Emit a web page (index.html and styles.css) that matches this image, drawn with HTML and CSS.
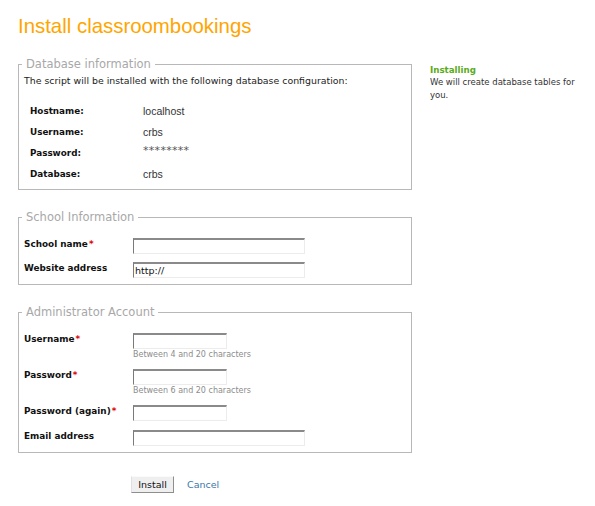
FILE: index.html
```html
<!DOCTYPE html>
<html>
<head>
<meta charset="utf-8">
<title>Install classroombookings</title>
<link rel="stylesheet" href="styles.css">
</head>
<body>
<div class="page">
  <h1 class="title">Install classroombookings</h1>
  <div class="layout">
    <form class="main">
      <fieldset class="box box-db">
        <legend>Database information</legend>
        <p class="intro">The script will be installed with the following database configuration:</p>
        <div class="dbtable">
          <div class="dbrow"><span class="dbkey">Hostname:</span><span class="dbval">localhost</span></div>
          <div class="dbrow"><span class="dbkey">Username:</span><span class="dbval">crbs</span></div>
          <div class="dbrow"><span class="dbkey">Password:</span><span class="dbval dbpass">********</span></div>
          <div class="dbrow"><span class="dbkey">Database:</span><span class="dbval">crbs</span></div>
        </div>
      </fieldset>

      <fieldset class="box">
        <legend>School Information</legend>
        <div class="rows">
          <div class="row"><label class="lbl">School name<span class="req">*</span></label><div class="field"><input class="inp inp-long" type="text"></div></div>
          <div class="row"><label class="lbl">Website address</label><div class="field"><input class="inp inp-long" type="text" value="http://"></div></div>
        </div>
      </fieldset>

      <fieldset class="box">
        <legend>Administrator Account</legend>
        <div class="rows">
          <div class="row"><label class="lbl">Username<span class="req">*</span></label><div class="field"><input class="inp inp-short" type="text"><div class="hint">Between 4 and 20 characters</div></div></div>
          <div class="row"><label class="lbl">Password<span class="req">*</span></label><div class="field"><input class="inp inp-short" type="password"><div class="hint">Between 6 and 20 characters</div></div></div>
          <div class="row"><label class="lbl">Password (again)<span class="req">*</span></label><div class="field"><input class="inp inp-short" type="password"></div></div>
          <div class="row row-last"><label class="lbl">Email address</label><div class="field"><input class="inp inp-long" type="text"></div></div>
        </div>
      </fieldset>

      <div class="actions">
        <button class="btn" type="button">Install</button>
        <a class="cancel" href="#">Cancel</a>
      </div>
    </form>
    <aside class="side">
      <div class="side-title">Installing</div>
      <div class="side-text">We will create database tables for you.</div>
    </aside>
  </div>
</div>
</body>
</html>
```

FILE: styles.css
```css
html, body {
  margin: 0;
  padding: 0;
  background: #fff;
}
body {
  font-family: "DejaVu Sans", Verdana, sans-serif;
  font-size: 9.4px;
  color: #222;
}
.page {
  padding: 0 18px;
}
.title {
  margin: 13px 0 0;
  font-family: "Liberation Sans", Arial, sans-serif;
  font-weight: normal;
  font-size: 20.4px;
  line-height: 26px;
  color: #ffa500;
}
.layout {
  display: grid;
  grid-template-columns: 394px 150px;
  column-gap: 18px;
  margin-top: 18px;
  align-items: start;
}
.main {
  margin: 0;
}
.box {
  margin: 0 0 20px;
  padding: 14px 5px 6px;
  border: 1px solid #b8b8b8;
  min-width: 0;
}
.box legend {
  padding: 0 4px;
  margin-left: -2px;
  font-size: 11.5px;
  line-height: 14px;
  color: #a8a8a8;
}
.box-db {
  padding-top: 4px;
  padding-bottom: 5px;
}
.intro {
  margin: 0;
  line-height: 12px;
  color: #222;
}
.dbtable {
  margin-top: 13px;
  padding-left: 6px;
}
.dbrow {
  display: grid;
  grid-template-columns: 113px 1fr;
  height: 21px;
  align-items: center;
}
.dbkey {
  font-weight: bold;
  font-size: 8.8px;
  color: #111;
}
.dbval {
  font-family: "Liberation Sans", Arial, sans-serif;
  font-size: 10.5px;
  color: #333;
}
.dbpass {
  font-family: "DejaVu Sans", Verdana, sans-serif;
  font-size: 11px;
  letter-spacing: 0.3px;
  line-height: 12px;
  color: #555;
  position: relative;
  top: -2px;
}
.rows {
  display: flex;
  flex-direction: column;
  gap: 8px;
}
.row {
  display: grid;
  grid-template-columns: 109px 1fr;
  align-items: start;
}
.row-last {
  margin-top: 1px;
}
.lbl {
  font-weight: bold;
  font-size: 8.9px;
  line-height: 13px;
  color: #111;
}
.req {
  color: #d00;
  margin-left: 1px;
}
.field {
  display: flex;
  flex-direction: column;
  align-items: flex-start;
}
.inp {
  box-sizing: border-box;
  height: 16px;
  margin: 0;
  padding: 0 1px;
  border-style: solid;
  border-width: 2px 1px 1px 1px;
  border-color: #8a8a8a #ececec #ececec #7a7a7a;
  background: #fff;
  font-family: "DejaVu Sans", Verdana, sans-serif;
  font-size: 9.5px;
  color: #111;
  outline: none;
}
.inp-long {
  width: 172px;
}
.inp-short {
  width: 94px;
}
.hint {
  font-size: 8px;
  line-height: 12px;
  color: #8c8c8c;
}
.actions {
  display: flex;
  align-items: center;
  gap: 13px;
  padding-left: 113px;
  margin-top: 23px;
}
.btn {
  box-sizing: border-box;
  height: 17px;
  width: 43px;
  padding: 0;
  background: #efefef;
  border: 1px solid;
  border-color: #fafafa #8e8e8e #8e8e8e #e0e0e0;
  font-family: "DejaVu Sans", Verdana, sans-serif;
  font-size: 9.5px;
  color: #111;
}
.cancel {
  font-size: 9.5px;
  color: #3a78aa;
  text-decoration: none;
}
.side {
  padding-top: 7px;
}
.side-title {
  font-weight: bold;
  font-size: 8.7px;
  line-height: 12px;
  color: #5aab1c;
}
.side-text {
  font-size: 8.5px;
  line-height: 13px;
  color: #333;
}
```
